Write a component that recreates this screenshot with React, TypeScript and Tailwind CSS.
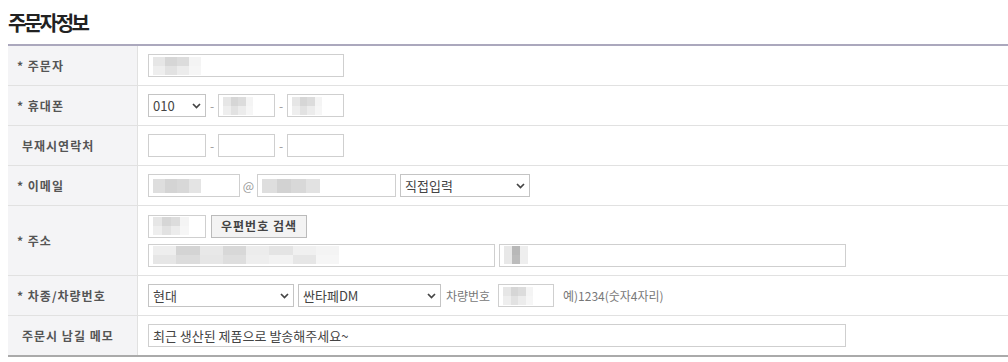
import React from "react";

const font = { fontFamily: '"Noto Sans CJK KR", "Noto Sans", sans-serif' };

function Blur({ w, h = 18, cells }: { w: number; h?: number; cells: string[] }) {
  return (
    <span className="inline-flex flex-wrap overflow-hidden" style={{ width: w, height: h }}>
      {cells.map((c, i) => (
        <span key={i} style={{ background: c, width: w / (cells.length / 2), height: h / 2 }} />
      ))}
    </span>
  );
}

function Field({ w, children }: { w: number; children?: React.ReactNode }) {
  return (
    <div
      className="h-[23px] border border-[#cfcfcf] bg-white flex items-center px-[4px] text-[13px] text-[#444] shrink-0"
      style={{ width: w }}
    >
      {children}
    </div>
  );
}

function Select({ w, value }: { w: number; value: string }) {
  return (
    <div
      className="h-[23px] border border-[#c4c4c4] bg-white flex items-center justify-between pl-[4px] pr-[4px] text-[13px] text-[#444] shrink-0"
      style={{ width: w }}
    >
      <span>{value}</span>
      <svg width="9" height="6" viewBox="0 0 9 6">
        <path d="M1 1l3.5 3.5L8 1" stroke="#444" strokeWidth="1.7" fill="none" />
      </svg>
    </div>
  );
}

function Dash() {
  return <span className="text-[12px] text-[#999] w-[12px] text-center">-</span>;
}

function Row({ label, star, h = 40, children }: { label: string; star?: boolean; h?: number; children: React.ReactNode }) {
  return (
    <div className="flex border-b border-[#e1e1e1]" style={{ height: h }}>
      <div className="w-[130px] shrink-0 bg-[#f4f4f6] border-r border-[#e1e1e1] flex items-center text-[12px] font-bold text-[#555] tracking-[1px]">
        {star ? <span className="pl-[9px]">* {label}</span> : <span className="pl-[14px]">{label}</span>}
      </div>
      <div className="flex-1 pl-[10px] flex flex-col justify-center gap-[6px]">{children}</div>
    </div>
  );
}

export default function App() {
  const g = ["#e6e6e6", "#d6d6d6", "#dcdcdc", "#f4f4f4", "#eeeeee", "#e2e2e2", "#ececec", "#f6f6f6"];
  return (
    <div className="w-[1008px] h-[362px] bg-white" style={font}>
      <div className="pl-[8px] pt-[9px] h-[44px] text-[20px] font-bold text-[#222] tracking-[-2.5px] leading-[28px]">주문자정보</div>
      <div className="ml-[8px] border-t-2 border-[#aba8bd]">
        <Row label="주문자" star>
          <Field w={196}>
            <Blur w={48} cells={g} />
          </Field>
        </Row>
        <Row label="휴대폰" star>
          <div className="flex items-center">
            <Select w={58} value="010" />
            <Dash />
            <Field w={57}>
              <Blur w={30} cells={g} />
            </Field>
            <Dash />
            <Field w={57}>
              <Blur w={30} cells={g} />
            </Field>
          </div>
        </Row>
        <Row label="부재시연락처">
          <div className="flex items-center">
            <Field w={58} />
            <Dash />
            <Field w={57} />
            <Dash />
            <Field w={57} />
          </div>
        </Row>
        <Row label="이메일" star>
          <div className="flex items-center">
            <Field w={92}>
              <Blur w={48} h={14} cells={["#dedede", "#d4d4d4", "#d8d8d8", "#e4e4e4", "#dedede", "#d4d4d4", "#d8d8d8", "#e4e4e4"]} />
            </Field>
            <span className="w-[17px] text-center text-[12px] text-[#999]">@</span>
            <Field w={139}>
              <Blur w={58} h={14} cells={["#dedede", "#d2d2d2", "#d8d8d8", "#e2e2e2", "#dedede", "#d2d2d2", "#d8d8d8", "#e2e2e2"]} />
            </Field>
            <span className="w-[4px]" />
            <Select w={130} value="직접입력" />
          </div>
        </Row>
        <Row label="주소" star h={70}>
          <div className="flex items-center">
            <Field w={58}>
              <Blur w={36} cells={g} />
            </Field>
            <span className="w-[5px]" />
            <div className="h-[23px] w-[96px] border border-[#bbb] bg-[#f3f3f3] flex items-center justify-center text-[12px] font-bold text-[#444] tracking-[1px]">
              우편번호 검색
            </div>
          </div>
          <div className="flex items-center">
            <Field w={347}>
              <Blur w={186} cells={["#eee", "#d4d4d4", "#e8e8e8", "#d8d8d8", "#ececec", "#e4e4e4", "#f0f0f0", "#f4f4f4", "#e6e6e6", "#dcdcdc", "#e6e6e6", "#dedede", "#eee", "#f2f2f2", "#e6e6e6", "#f6f6f6"]} />
            </Field>
            <span className="w-[4px]" />
            <Field w={347}>
              <Blur w={24} cells={["#e8e8e8", "#b8b8b8", "#eeeeee", "#e8e8e8", "#bcbcbc", "#eeeeee"]} />
            </Field>
          </div>
        </Row>
        <Row label="차종/차량번호" star>
          <div className="flex items-center text-[12px] text-[#777]">
            <Select w={146} value="현대" />
            <span className="w-[4px]" />
            <Select w={143} value="싼타페DM" />
            <span className="pl-[5px] w-[57px] whitespace-nowrap">차량번호</span>
            <Field w={56}>
              <Blur w={30} cells={g} />
            </Field>
            <span className="pl-[9px]">예)1234(숫자4자리)</span>
          </div>
        </Row>
        <Row label="주문시 남길 메모">
          <Field w={698}>최근 생산된 제품으로 발송해주세요~</Field>
        </Row>
        <div className="h-[2px] bg-[#aaaaaa] -mt-[1px]" />
      </div>
    </div>
  );
}
